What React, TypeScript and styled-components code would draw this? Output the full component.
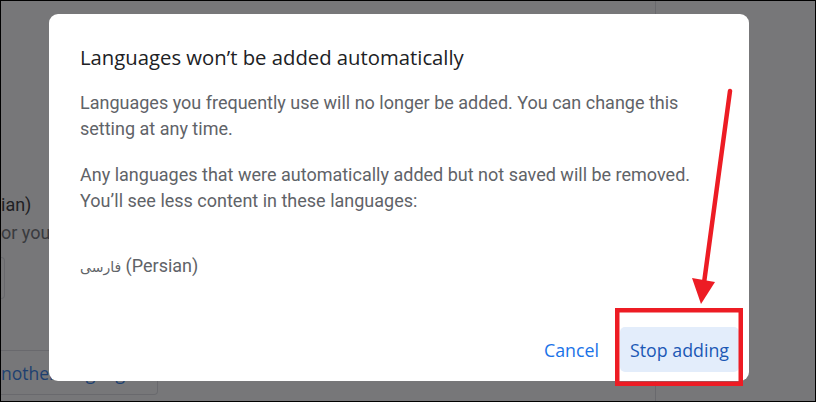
import React from 'react';
import styled, { createGlobalStyle } from 'styled-components';

const GlobalStyle = createGlobalStyle`
  html, body {
    margin: 0;
    padding: 0;
    background: #ffffff;
  }
  * {
    box-sizing: border-box;
  }
`;

const Screen = styled.div`
  position: relative;
  width: 816px;
  height: 402px;
  overflow: hidden;
  border: 1px solid #000000;
  background: #ffffff;
  font-family: Roboto, "Liberation Sans", sans-serif;
`;

const Page = styled.div`
  display: flex;
  height: 100%;
`;

const MainColumn = styled.div`
  width: 655px;
  border-right: 1px solid #dadce0;
  display: flex;
  flex-direction: column;
  padding-top: 191px;
`;

const BgLine = styled.div<{ $muted?: boolean }>`
  font-size: 18px;
  line-height: 25px;
  height: ${p => (p.$muted ? '30px' : '28px')};
  color: ${p => (p.$muted ? '#5f6368' : '#202124')};
  white-space: nowrap;
`;

const BgSelect = styled.div`
  width: 4px;
  height: 42px;
  margin-top: 7px;
  border: 1px solid #dadce0;
  border-left: none;
  border-radius: 0 5px 5px 0;
`;

const BgButton = styled.div`
  width: 157px;
  height: 45px;
  margin-top: 51px;
  display: flex;
  align-items: center;
  border: 1px solid #dadce0;
  border-left: none;
  border-radius: 0 4px 4px 0;
  font-family: "Open Sans", "Noto Sans", sans-serif;
  font-weight: 500;
  font-size: 17.5px;
  color: #1a73e8;
  white-space: nowrap;
  overflow: hidden;
`;

const Scrim = styled.div`
  position: absolute;
  inset: 0;
  background: rgba(32, 33, 36, 0.61);
  padding: 13px 0 0 48px;
`;

const Dialog = styled.div`
  width: 700px;
  height: 367px;
  background: #ffffff;
  border-radius: 9px;
  display: flex;
  flex-direction: column;
  padding: 30px 10px 9px 31px;
`;

const Title = styled.h2`
  margin: 0;
  font-family: "Open Sans", "Noto Sans", sans-serif;
  font-weight: 500;
  font-size: 20.3px;
  line-height: 26px;
  color: #202124;
`;

const Body = styled.p<{ $gap: number }>`
  margin: ${p => p.$gap}px 0 0;
  font-size: 18px;
  line-height: 25.5px;
  color: #5f6368;
  white-space: pre-line;
`;

const NativeName = styled.span`
  font-family: "DejaVu Sans", "Noto Sans", sans-serif;
  font-size: 14px;
`;

const Actions = styled.div`
  margin-top: auto;
  display: flex;
  justify-content: flex-end;
  gap: 11px;
`;

const Button = styled.button<{ $primary?: boolean }>`
  height: 45px;
  padding: 0 10px;
  border: none;
  border-radius: 5px;
  background: ${p => (p.$primary ? '#e3edfb' : 'transparent')};
  color: ${p => (p.$primary ? '#1b58b5' : '#1a73e8')};
  font-family: "Open Sans", "Noto Sans", sans-serif;
  font-weight: 500;
  font-size: 17.8px;
  cursor: pointer;
`;

const Annotations = styled.svg`
  position: absolute;
  left: 0;
  top: 0;
  pointer-events: none;
`;

export default function App() {
  return (
    <>
      <GlobalStyle />
      <Screen>
        <Page>
          <MainColumn>
            <BgLine>ian)</BgLine>
            <BgLine $muted>or you</BgLine>
            <BgSelect />
            <BgButton>nother language</BgButton>
          </MainColumn>
        </Page>
        <Scrim>
          <Dialog role="dialog">
            <Title>Languages won’t be added automatically</Title>
            <Body $gap={20}>
              {'Languages you frequently use will no longer be added. You can change this\nsetting at any time.'}
            </Body>
            <Body $gap={21}>
              {'Any languages that were automatically added but not saved will be removed.\nYou’ll see less content in these languages:'}
            </Body>
            <Body $gap={40}>
              <NativeName>فارسی</NativeName> (Persian)
            </Body>
            <Actions>
              <Button>Cancel</Button>
              <Button $primary>Stop adding</Button>
            </Actions>
          </Dialog>
        </Scrim>
        <Annotations width="816" height="402" viewBox="0 0 816 402">
          <rect x="616.25" y="309.25" width="123.5" height="73.5" fill="none" stroke="#ed1c24" strokeWidth="4.5" />
          <line x1="729" y1="90" x2="703" y2="282" stroke="#ed1c24" strokeWidth="4.5" strokeLinecap="round" />
          <polygon points="691,277 714,281 700,303" fill="#ed1c24" />
        </Annotations>
      </Screen>
    </>
  );
}
